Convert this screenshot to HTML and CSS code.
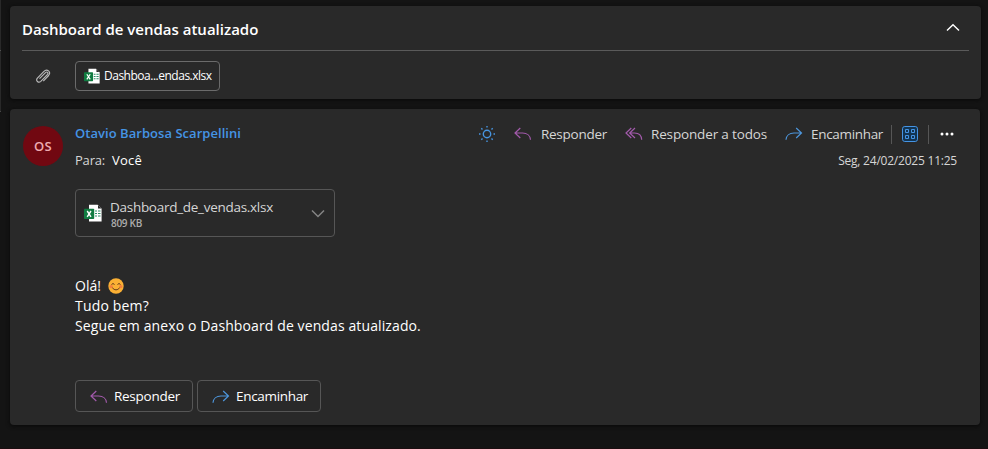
FILE: index.html
```html
<!DOCTYPE html>
<html lang="pt-BR">
<head>
<meta charset="utf-8">
<title>Dashboard de vendas atualizado</title>
<link rel="stylesheet" href="styles.css">
</head>
<body>
<svg class="defs" width="0" height="0">
  <symbol id="reply" viewBox="0 0 18 14"><path d="M6.3 1 1 6l5.3 5M1.3 6H8.500C13 6 16.300 8.700 16.500 12.800"/></symbol>
  <symbol id="reply-all" viewBox="0 0 18 14"><path d="M6.300 1 1 6l5.300 5M10 1 4.700 6l5.300 5M5 6h4.500c4.200 0 7 2.700 7.200 6.800"/></symbol>
  <symbol id="forward" viewBox="0 0 18 14"><path d="M11.200 1l5.300 5-5.300 5M16.200 6H9C4.500 6 1.200 8.700 1 12.800"/></symbol>
  <symbol id="excel" viewBox="0 0 18 18">
    <path fill="#fff" d="M5 .8h8.600l4 4v12.600H5z"/>
    <path fill="#292929" d="M14 1.200v3.400h3.400z"/>
    <path stroke="#2f8f68" stroke-width="1.200" d="M11 7h2M14 7h2.500M11 9.500h2M14 9.500h2.500M11 12h2M14 12h2.500"/>
    <rect y="4.800" width="10.200" height="10.200" rx=".8" fill="#107c41"/>
    <path stroke="#fff" stroke-width="1.400" d="m3.200 7 3.800 5.800M7 7l-3.800 5.800"/>
  </symbol>
</svg>
<aside class="edge"></aside>
<main class="pane">
  <section class="card subject">
    <header class="subject-row">
      <h1>Dashboard de vendas atualizado</h1>
      <svg class="collapse" viewBox="0 0 14 9"><path d="m1 7.500 6-5.800 6 5.800"/></svg>
    </header>
    <div class="attach-row">
      <svg class="clip" viewBox="0 0 16 16"><path d="m4.500 10.700 6-6.100c1.500-1.400 3.300.2 2 1.800l-6.700 6.900c-2.300 2.200-5.500-.6-3.400-3.100L8.700 3.600c3.300-3.500 7.800.2 4.900 3.900l-5.300 5.600"/></svg>
      <div class="chip"><svg class="xls-small"><use href="#excel"/></svg><span>Dashboa...endas.xlsx</span></div>
    </div>
  </section>

  <article class="card message">
    <div class="avatar">OS</div>
    <div class="content">
      <header class="head">
        <div class="people">
          <div class="sender">Otavio Barbosa Scarpellini</div>
          <div class="to"><span>Para:</span><b>Você</b></div>
        </div>
        <div class="right">
          <div class="actions">
            <svg class="sun" viewBox="0 0 18 18"><circle cx="9" cy="9" r="3.700"/><path d="M9 1v1.500M9 15.500V17M1 9h1.500M15.500 9H17M3.300 3.300l1.200 1.200M13.500 13.500l1.200 1.200M3.300 14.700l1.200-1.200M13.500 4.500l1.200-1.200"/></svg>
            <svg class="arrow purple a1"><use href="#reply"/></svg><span class="t-reply">Responder</span>
            <svg class="arrow purple a2"><use href="#reply-all"/></svg><span class="t-all">Responder a todos</span>
            <svg class="arrow blue a3"><use href="#forward"/></svg><span class="t-fwd">Encaminhar</span>
            <i class="sep"></i>
            <svg class="apps" viewBox="0 0 18 18"><rect x="1.500" y="1.500" width="15" height="15" rx="2.300" class="frame"/><path d="M4.500 4.500h3v3h-3zM10.500 4.500h3v3h-3zM4.500 10.500h3v3h-3zM10.500 10.500h3v3h-3z"/></svg>
            <i class="sep"></i>
            <svg class="more" viewBox="0 0 14 4"><circle cx="2" cy="2" r="1.500"/><circle cx="7" cy="2" r="1.500"/><circle cx="12" cy="2" r="1.500"/></svg>
          </div>
          <time>Seg, 24/02/2025 11:25</time>
        </div>
      </header>
      <div class="file">
        <svg class="xls"><use href="#excel"/></svg>
        <div class="file-text"><div class="file-name">Dashboard_de_vendas.xlsx</div><div class="size">809 KB</div></div>
        <svg class="drop" viewBox="0 0 14 9"><path d="m1 1.500 6 6 6-6"/></svg>
      </div>
      <div class="body">
        <p>Olá!<svg class="smile" viewBox="0 0 16 16"><circle cx="8" cy="8" r="7.700" fill="#fbb034"/><circle cx="3.200" cy="8.600" r="1.700" fill="#f5803e"/><circle cx="12.800" cy="8.600" r="1.700" fill="#f5803e"/><path d="M3.500 6.500q1.500-2 3 0M9.500 6.500q1.500-2 3 0M4.300 9.800q3.700 4.200 7.400 0"/></svg></p>
        <p class="loose">Tudo bem?</p>
        <p class="long">Segue em anexo o Dashboard de vendas atualizado.</p>
      </div>
      <footer class="buttons">
        <button class="b1"><svg class="arrow purple"><use href="#reply"/></svg><span class="t-reply">Responder</span></button>
        <button class="b2"><svg class="arrow blue"><use href="#forward"/></svg><span class="t-fwd">Encaminhar</span></button>
      </footer>
    </div>
  </article>
</main>
</body>
</html>
```
FILE: styles.css
```css
* { box-sizing: border-box; }
body { margin: 0; height: 449px; display: flex; background: #141414; color: #fff; font-family: "Open Sans", "Noto Sans", sans-serif; overflow: hidden; border-bottom: 1px solid #1b0e10; }
svg { display: block; flex: none; fill: none; }
.defs { position: absolute; }
.edge { width: 1px; height: 112px; background: linear-gradient(#292929 50px, #525252 50px, #525252 51px, #292929 51px, #292929 111px, #484848 111px); }
.pane { flex: 1; padding: 6px 7px 0 9px; }
.card { background: #292929; border-radius: 4px; box-shadow: 0 1px 4px #080808; }

.subject { height: 93px; padding: 0 12px; }
.subject-row { height: 45px; display: flex; align-items: center; justify-content: space-between; border-bottom: 1px solid #5a5a5a; padding: 2px 9px 0 0; }
h1 { margin: 0; font-size: 15px; line-height: 22px; font-weight: 600; }
.collapse { width: 14px; height: 9px; stroke: #fff; stroke-width: 1.4; margin-top: -4px; }
.attach-row { display: flex; align-items: center; height: 48px; padding-left: 13px; }
.clip { width: 16px; height: 16px; stroke: #b8b8b8; stroke-width: 1.15; margin-top: 1px; }
.chip { margin-left: 24px; margin-top: 1px; width: 145px; height: 30px; border: 1px solid #6b6b6b; border-radius: 4px; display: flex; align-items: center; padding-left: 8px; gap: 4px; font-size: 12px; letter-spacing: -.49px; white-space: nowrap; }
.xls-small { width: 16px; height: 16px; }

.message { width: 970px; height: 316px; margin-top: 10px; padding: 15px 23px 0 13px; display: flex; gap: 12px; }
.avatar { width: 40px; height: 40px; margin-top: 2px; border-radius: 50%; background: #710811; color: #eeacb2; display: flex; align-items: center; justify-content: center; font-size: 13px; font-weight: 600; letter-spacing: .3px; flex: none; }
.content { flex: 1; }
.head { display: flex; justify-content: space-between; height: 65px; }
.sender { font-size: 13px; line-height: 18px; font-weight: 600; letter-spacing: .04px; color: #4594e4; }
.to { display: flex; gap: 7px; font-size: 13px; line-height: 18px; margin-top: 9px; color: #d6d6d6; letter-spacing: -.2px; }
.to b { font-weight: 500; letter-spacing: .2px; color: #fff; }
.right { display: flex; flex-direction: column; align-items: flex-end; }
.actions { display: flex; align-items: center; height: 20px; margin-right: 3px; font-size: 13.5px; color: #d6d6d6; white-space: nowrap; }
.sun { width: 18px; height: 18px; stroke: #4794df; stroke-width: 1.4; }
.arrow { width: 18px; height: 14px; stroke-width: 1.2; }
.purple { stroke: #a35aac; }
.blue { stroke: #4d96dc; }
.a1 { margin: 0 9px 0 18px; }
.a2 { margin: 0 8px 0 18px; }
.a3 { margin: 0 8px 0 18px; }
.t-reply { width: 66px; letter-spacing: -.27px; }
.t-all { width: 116px; letter-spacing: -.15px; }
.t-fwd { width: 72px; letter-spacing: -.32px; }
.sep { width: 1px; height: 19px; margin: 0 9px 0 8px; background: #565656; }
.apps { width: 18px; height: 18px; stroke: #4594e4; stroke-width: 1; }
.apps .frame { fill: #123452; }
.apps + .sep { margin-left: 9px; }
.more { width: 14px; height: 4px; fill: #fff; margin-left: 2px; }
time { font-size: 12px; line-height: 18px; letter-spacing: -.22px; margin-top: 8px; color: #d6d6d6; white-space: nowrap; }

.file { width: 260px; height: 48px; border: 1px solid #565656; border-radius: 4px; display: flex; align-items: center; padding: 0 9px 0 8px; }
.xls { width: 18px; height: 18px; }
.file-text { flex: 1; margin-left: 8px; }
.file-name { font-size: 13.5px; line-height: 18px; letter-spacing: -.28px; color: #d6d6d6; }
.size { padding: 1px 0 0 1px; margin-bottom: -1px; font-size: 10px; line-height: 13px; font-weight: 600; letter-spacing: -.29px; color: #adadad; }
.drop { width: 14px; height: 9px; stroke: #858585; stroke-width: 1.5; }

.body { margin-top: 39px; font-size: 14px; line-height: 20px; }
.body p { margin: 0; display: flex; align-items: center; }
.body .loose { letter-spacing: .18px; }
.body .long { letter-spacing: .11px; }
.smile { width: 16px; height: 16px; margin-left: 7px; stroke: #65391b; stroke-width: 1; }
.smile circle { stroke: none; }
.buttons { display: flex; gap: 4px; margin-top: 44px; }
button { height: 32px; background: none; border: 1px solid #565656; border-radius: 4px; display: flex; align-items: center; padding: 0 0 0 14px; gap: 6px; font: 13.5px "Open Sans", sans-serif; color: #fff; text-align: left; }
button .arrow { margin-top: 1px; }
.b1 { width: 118px; }
.b2 { width: 124px; }
```
